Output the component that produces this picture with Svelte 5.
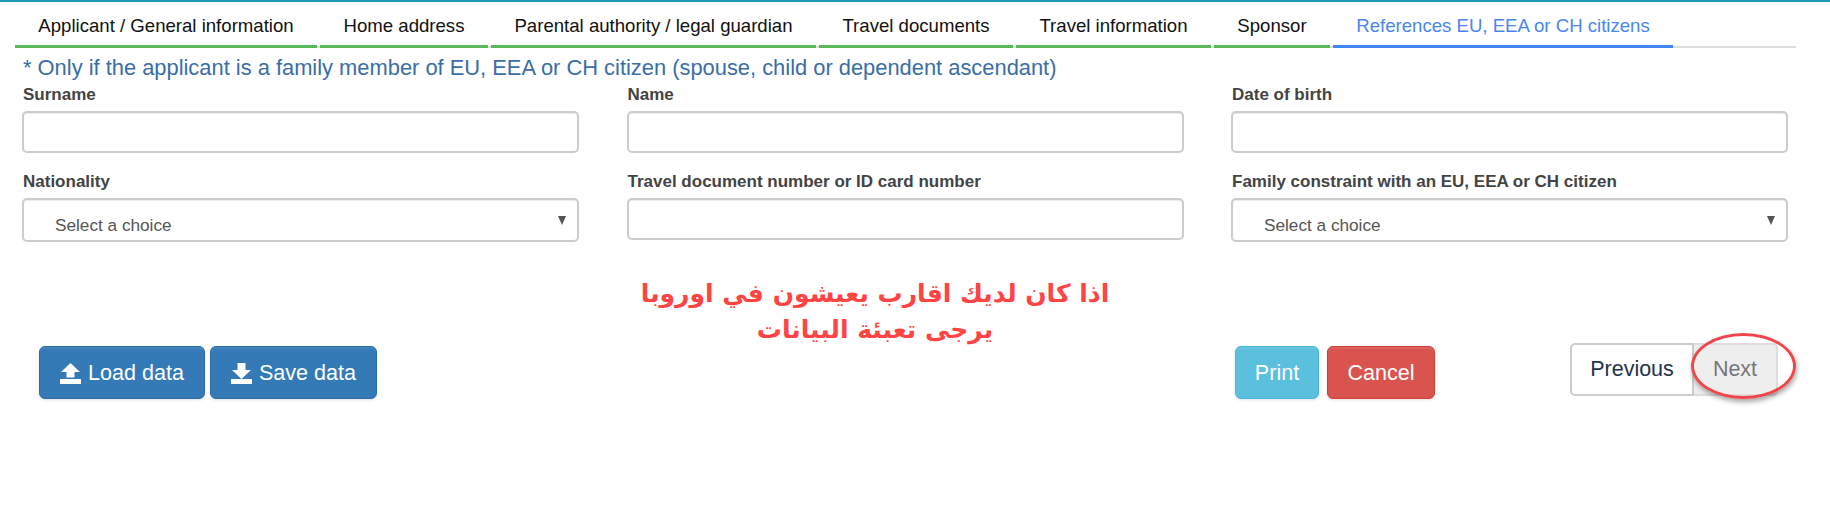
<script>
	const tabs = [
		{ label: 'Applicant / General information', width: 302 },
		{ label: 'Home address', width: 168 },
		{ label: 'Parental authority / legal guardian', width: 325 },
		{ label: 'Travel documents', width: 194 },
		{ label: 'Travel information', width: 195 },
		{ label: 'Sponsor', width: 116 },
		{ label: 'References EU, EEA or CH citizens', width: 340, active: true },
	]

	const fields = [
		{ label: 'Surname' },
		{ label: 'Name' },
		{ label: 'Date of birth' },
		{ label: 'Nationality', select: true },
		{ label: 'Travel document number or ID card number' },
		{ label: 'Family constraint with an EU, EEA or CH citizen', select: true },
	]
</script>

<div class="page">
	<ul class="tabs">
		{#each tabs as tab}
			<li class="tab" class:active={tab.active} style:width="{tab.width}px">{tab.label}</li>
		{/each}
	</ul>

	<p class="note">* Only if the applicant is a family member of EU, EEA or CH citizen (spouse, child or dependent ascendant)</p>

	<div class="fields">
		{#each fields as field}
			<div class="field">
				<label for={field.label}>{field.label}</label>
				{#if field.select}
					<div class="select-wrap">
						<select id={field.label}>
							<option>Select a choice</option>
						</select>
						<span class="caret"></span>
					</div>
				{:else}
					<input id={field.label} type="text" />
				{/if}
			</div>
		{/each}
	</div>

	<p class="notice" dir="rtl">اذا كان لديك اقارب يعيشون في اوروبا<br />يرجى تعبئة البيانات</p>

	<div class="actions">
		<div class="group data">
			<button class="btn primary load">
				<svg width="21" height="22" viewBox="0 0 21 22" fill="#fff"><path d="M10.500 1 20 10h-5.500v5.500h-8V10H1z" /><rect y="17" width="21" height="5" /></svg>
				Load data
			</button>
			<button class="btn primary save">
				<svg width="21" height="22" viewBox="0 0 21 22" fill="#fff"><path d="M6.500 1h8v7H20l-9.500 9L1 8h5.500z" /><rect y="17" width="21" height="5" /></svg>
				Save data
			</button>
		</div>
		<div class="group form-actions">
			<button class="btn info">Print</button>
			<button class="btn danger">Cancel</button>
		</div>
		<div class="pager">
			<button class="page-btn prev">Previous</button>
			<button class="page-btn next" disabled>Next</button>
			<span class="ring"></span>
		</div>
	</div>
</div>

<style>
	:global(body) {
		margin: 0;
		background: #fff;
	}

	.page {
		width: 1830px;
		height: 522px;
		box-sizing: border-box;
		border-top: 2px solid #1b98b6;
		font-family: "Liberation Sans", Arial, sans-serif;
		overflow: hidden;
	}

	.tabs {
		display: flex;
		gap: 3px;
		list-style: none;
		margin: 0 0 0 15px;
		padding: 0;
		width: 1781px;
		height: 46px;
		box-sizing: border-box;
		border-bottom: 2px solid #ddd;
	}

	.tab {
		box-sizing: border-box;
		height: 46px;
		padding-top: 13px;
		text-align: center;
		font-size: 18.600px;
		line-height: 22px;
		color: #111;
		border-bottom: 3px solid #5cb85c;
	}

	.tab.active {
		color: #4a86ef;
		border-bottom-color: #4285f4;
	}

	.note {
		margin: 8px 0 0 23px;
		font-size: 21.880px;
		line-height: 24px;
		color: #3a6ea5;
	}

	.fields {
		display: grid;
		grid-template-columns: repeat(3, 557px);
		column-gap: 47.500px;
		row-gap: 18px;
		margin: 4px 0 0 22px;
	}

	.field {
		display: flex;
		flex-direction: column;
	}

	label {
		font-size: 17px;
		font-weight: 700;
		line-height: 22px;
		height: 27px;
		padding-left: 1px;
		color: #444;
	}

	input,
	select {
		display: block;
		width: 100%;
		height: 42px;
		box-sizing: border-box;
		border: 2px solid #ccc;
		border-radius: 5px;
		background: #fff;
		box-shadow: inset 0 1px 1px rgba(0, 0, 0, 0.075);
		font-family: inherit;
		outline: none;
	}

	.select-wrap {
		position: relative;
	}

	select {
		height: 44px;
		appearance: none;
		padding: 10px 0 0 31px;
		font-size: 17.200px;
		color: #555;
	}

	.caret {
		position: absolute;
		right: 13px;
		top: 18px;
		border-left: 4.500px solid transparent;
		border-right: 4.500px solid transparent;
		border-top: 9px solid #555;
	}

	.notice {
		margin: 34px 0 0 0;
		width: 1750px;
		text-align: center;
		font-family: "DejaVu Sans", sans-serif;
		font-weight: 700;
		font-size: 25px;
		line-height: 36px;
		color: #ff4444;
	}

	.actions {
		display: flex;
		align-items: flex-start;
		margin-top: -2px;
		padding-left: 39px;
	}

	.group {
		display: flex;
	}

	.data {
		gap: 5px;
	}

	.form-actions {
		gap: 8px;
		margin-left: 858px;
	}

	.btn {
		height: 53px;
		box-sizing: border-box;
		border: 1px solid;
		border-radius: 6px;
		font-family: inherit;
		font-size: 21.600px;
		color: #fff;
		display: flex;
		align-items: center;
		justify-content: center;
		gap: 7px;
		padding: 0;
		box-shadow: inset 0 2px 0 rgba(255, 255, 255, 0.08), 0 1px 3px rgba(0, 0, 0, 0.12);
	}

	.primary {
		background: #337ab7;
		border-color: #2e6da4;
	}

	.load {
		width: 166px;
	}

	.save {
		width: 167px;
	}

	.info {
		width: 84px;
		background: #5bc0de;
		border-color: #46b8da;
	}

	.danger {
		width: 108px;
		background: #d9534f;
		border-color: #d43f3a;
	}

	.pager {
		position: relative;
		display: flex;
		margin: -3px 0 0 135px;
	}

	.page-btn {
		height: 53px;
		box-sizing: border-box;
		border: 2px solid #ccc;
		font-family: inherit;
		font-size: 21.500px;
		padding: 0;
	}

	.prev {
		width: 124px;
		background: #fff;
		color: #23334a;
		border-radius: 5px 0 0 5px;
	}

	.next {
		width: 84px;
		background: #eee;
		color: #777;
		border-color: #ddd;
		border-left: none;
		border-radius: 0 5px 5px 0;
	}

	.ring {
		position: absolute;
		left: 121px;
		top: -10px;
		width: 105px;
		height: 66px;
		box-sizing: border-box;
		border: 3px solid #f0454a;
		border-radius: 50%;
		box-shadow: 1px 3px 5px rgba(0, 0, 0, 0.35);
		pointer-events: none;
	}
</style>
